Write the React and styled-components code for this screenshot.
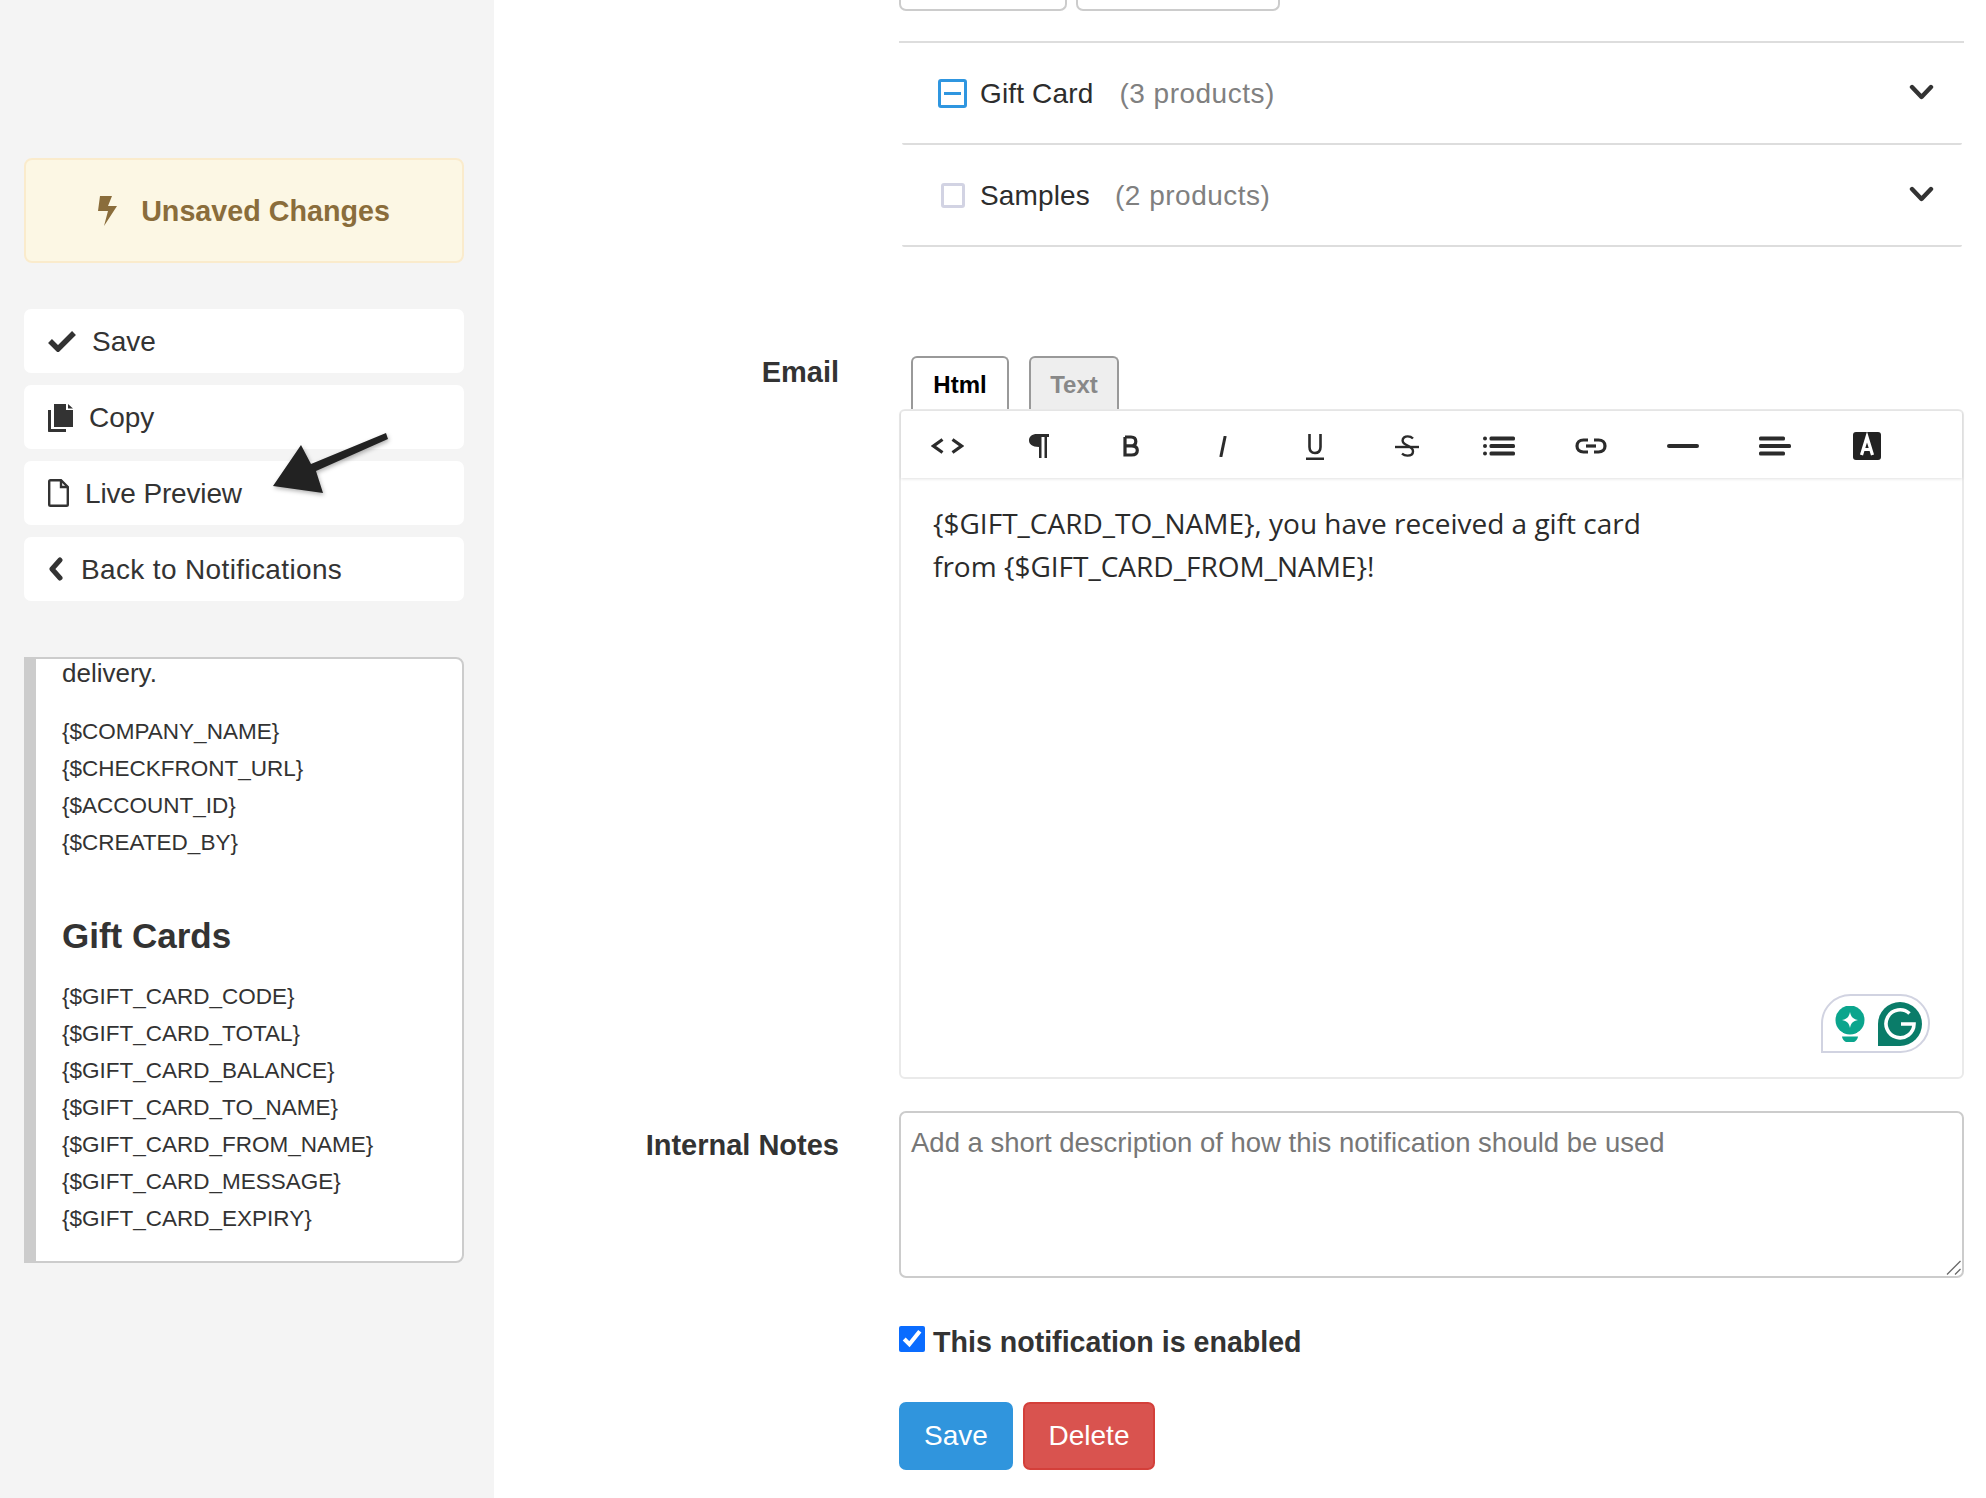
import React from "react";
import styled, { createGlobalStyle } from "styled-components";

const GlobalStyle = createGlobalStyle`
  html, body {
    margin: 0;
    padding: 0;
    background: #fff;
  }
  body {
    font-family: "Liberation Sans", Arial, sans-serif;
    color: #333;
    overflow: hidden;
  }
`;

const Page = styled.div`
  display: flex;
  width: 1986px;
  height: 1498px;
  overflow: hidden;
`;

const Sidebar = styled.aside`
  position: relative;
  box-sizing: border-box;
  width: 494px;
  flex: none;
  padding: 158px 30px 0 24px;
  background: #f4f4f4;
`;

const Alert = styled.div`
  box-sizing: border-box;
  display: flex;
  align-items: center;
  justify-content: center;
  gap: 24px;
  height: 105px;
  margin-bottom: 46px;
  padding-top: 1px;
  background: #fcf7e4;
  border: 2px solid #faebcc;
  border-radius: 8px;
  color: #8a6d3b;
  font-size: 28.7px;
  font-weight: 700;
`;

const ActionList = styled.div`
  display: flex;
  flex-direction: column;
  gap: 12px;
`;

const ActionButton = styled.a`
  box-sizing: border-box;
  display: flex;
  align-items: center;
  gap: ${(p) => p.$gap}px;
  height: 64px;
  padding: 1px 0 0 24px;
  background: #fff;
  border-radius: 7px;
  font-size: 28px;
  letter-spacing: ${(p) => p.$track || 0}px;
  color: #333;

  svg {
    margin-top: -1px;
  }
`;

const Arrow = styled.svg`
  position: absolute;
  left: 267px;
  top: 428px;
  filter: drop-shadow(1px 2px 2px rgba(0, 0, 0, 0.3));
`;

const HelpPanel = styled.div`
  box-sizing: border-box;
  height: 606px;
  margin-top: 56px;
  padding: 0 20px 0 26px;
  background: #fff;
  border: 2px solid #ccc;
  border-left: 12px solid #ccc;
  border-radius: 0 8px 8px 0;
  overflow: hidden;
`;

const HelpText = styled.p`
  margin: 0 0 26px;
  font-size: 26px;
  line-height: 28px;
`;

const VarList = styled.div`
  font-size: 22.5px;
  line-height: 37px;
`;

const HelpHeading = styled.h3`
  margin: 55px 0 22px;
  font-size: 35px;
  line-height: 40px;
  font-weight: 700;
`;

const Main = styled.main`
  flex: 1;
  min-width: 0;
  padding-right: 22px;
`;

const StubRow = styled.div`
  display: flex;
  gap: 9px;
  margin-left: 405px;
`;

const Stub = styled.div`
  box-sizing: border-box;
  width: ${(p) => p.$w}px;
  height: 11px;
  border: 2px solid #ccc;
  border-top: 0;
  border-radius: 0 0 7px 7px;
`;

const ProductList = styled.section`
  margin: 30px 0 0 405px;
  border-top: 2px solid #ddd;
`;

const ProductRow = styled.div`
  box-sizing: border-box;
  display: flex;
  align-items: center;
  height: 102px;
  margin: 0 2px 0 3px;
  padding: 1px 28px 0 23px;
  border-bottom: 2px solid #ddd;
  border-radius: 0 0 2px 2px;
  font-size: 28px;
  letter-spacing: 0.15px;
  color: #2d2d2d;
`;

const CheckSlot = styled.div`
  display: flex;
  justify-content: center;
  width: 55px;
  flex: none;
`;

const PartialBox = styled.span`
  box-sizing: border-box;
  display: flex;
  align-items: center;
  justify-content: center;
  width: 29px;
  height: 29px;
  margin-right: 1px;
  border: 3px solid #2f96e0;
  border-radius: 3px;

  &::after {
    content: "";
    width: 17px;
    height: 3px;
    background: #2f96e0;
  }
`;

const EmptyBox = styled.span`
  box-sizing: border-box;
  width: 24px;
  height: 25px;
  border: 3px solid #d2d3e3;
  border-radius: 3px;
`;

const ProductCount = styled.span`
  margin-left: ${(p) => p.$ml}px;
  letter-spacing: 0.5px;
  color: #808080;
`;

const Chevron = styled.svg`
  margin-left: auto;
  margin-top: -3px;
`;

const FormRow = styled.div`
  display: grid;
  grid-template-columns: 345px 1fr;
  column-gap: 60px;
  margin-top: ${(p) => p.$mt}px;
`;

const FieldLabel = styled.label`
  padding-top: ${(p) => p.$pt}px;
  text-align: right;
  font-size: 29px;
  line-height: 32px;
  font-weight: 700;
  color: #333;
`;

const TabBar = styled.div`
  display: flex;
  gap: 20px;
  padding-left: 12px;
`;

const Tab = styled.div`
  box-sizing: border-box;
  display: flex;
  align-items: center;
  justify-content: center;
  width: ${(p) => p.$w}px;
  height: 53px;
  padding-top: 3px;
  border: 2px solid #999;
  border-bottom: 0;
  border-radius: 6px 6px 0 0;
  background: ${(p) => (p.$active ? "#fff" : "#eee")};
  color: ${(p) => (p.$active ? "#000" : "#888")};
  font-size: 24px;
  font-weight: 700;
`;

const Editor = styled.div`
  position: relative;
  box-sizing: border-box;
  height: 670px;
  border: 2px solid #eaeaea;
  border-radius: 6px;
`;

const Toolbar = styled.div`
  display: flex;
  align-items: center;
  height: 67px;
  box-shadow: 0 1px 3px rgba(0, 0, 0, 0.12);
`;

const ToolButton = styled.span`
  box-sizing: border-box;
  display: flex;
  align-items: center;
  justify-content: center;
  width: 92px;
  height: 100%;
  padding-top: 3px;
`;

const EditorBody = styled.div`
  max-width: 740px;
  padding: 24px 0 0 32px;
  font-family: "Open Sans", sans-serif;
  font-size: 28px;
  line-height: 43px;
  color: #2b2b2b;
`;

const GrammarlyBadge = styled.div`
  position: absolute;
  right: 32px;
  bottom: 24px;
  box-sizing: border-box;
  display: flex;
  align-items: center;
  gap: 13px;
  width: 109px;
  height: 59px;
  padding-left: 12px;
  border: 2px solid #d1d3e1;
  border-radius: 30px 30px 30px 0;
  background: #fff;
`;

const NotesBox = styled.div`
  position: relative;
  height: 167px;
`;

const Notes = styled.textarea`
  display: block;
  box-sizing: border-box;
  width: 100%;
  height: 100%;
  padding: 14px 10px;
  border: 2px solid #ccc;
  border-radius: 7px;
  font-family: "Liberation Sans", Arial, sans-serif;
  font-size: 27.5px;
  line-height: 32px;
  outline: none;
  resize: none;

  &::placeholder {
    color: #777;
    opacity: 1;
  }
`;

const ResizeGrip = styled.svg`
  position: absolute;
  right: 3px;
  bottom: 3px;
`;

const EnableRow = styled.label`
  display: flex;
  align-items: center;
  gap: 8px;
  height: 32px;
  margin: 48px 0 0 405px;
  font-size: 28.6px;
  font-weight: 700;
  color: #333;
`;

const EnableBox = styled.input`
  width: 26px;
  height: 26px;
  margin: -6px 0 0;
  accent-color: #0a6cff;
`;

const Buttons = styled.div`
  display: flex;
  gap: 10px;
  margin: 44px 0 0 405px;
`;

const SolidButton = styled.button`
  box-sizing: border-box;
  width: ${(p) => p.$w}px;
  height: 68px;
  padding: 0;
  border: 2px solid ${(p) => p.$edge};
  border-radius: 7px;
  background: ${(p) => p.$bg};
  color: #fff;
  font-family: "Liberation Sans", Arial, sans-serif;
  font-size: 28px;
`;

const dark = "#2b2b2b";

const toolIcons = [
  <svg key="code" width="33" height="16" viewBox="0 0 33 16" fill="none" stroke={dark} strokeWidth="3.2">
    <polyline points="11.5,1.5 2.5,8 11.5,14.5" />
    <polyline points="21.5,1.5 30.5,8 21.5,14.5" />
  </svg>,
  <svg key="para" width="20" height="24" viewBox="0 0 20 24" fill={dark}>
    <path d="M8 0H20V3H18V24H15.500V3H12.500V24H10V13C3 13 0 10 0 6.500C0 2.500 3 0 8 0Z" />
  </svg>,
  <svg key="bold" width="16" height="22" viewBox="0 0 16 22" fill="none" stroke={dark} strokeWidth="3.2">
    <path d="M2 2V20H8.500C12.500 20 14.300 18 14.300 15.200C14.300 12.400 12.500 10.800 8.500 10.800H2M8 10.800C11.200 10.800 12.800 9 12.800 6.400C12.800 3.800 11.200 2 8 2H2" />
  </svg>,
  <svg key="italic" width="8" height="21" viewBox="0 0 8 21" fill="none" stroke={dark} strokeWidth="3">
    <line x1="6.200" y1="0" x2="1.800" y2="21" />
  </svg>,
  <svg key="underline" width="18" height="27" viewBox="0 0 18 27" fill="none" stroke={dark} strokeWidth="2.600">
    <path d="M3.500 1V14C3.500 18 5.500 20 9 20C12.500 20 14.500 18 14.500 14V1" />
    <line x1="0" y1="25.800" x2="18" y2="25.800" />
  </svg>,
  <svg key="strike" width="24" height="22" viewBox="0 0 24 22" fill="none" stroke={dark} strokeWidth="2.400">
    <path d="M18 3.500C16.500 2 14.800 1.400 12.800 1.400C9.600 1.400 7.600 3 7.600 5.600C7.600 8 9.600 9.400 12.600 10.600C15.800 12 18 13.400 18 16.200C18 19 15.600 20.600 12.400 20.600C10.400 20.600 8.600 20 7 18.600" />
    <line x1="0" y1="12" x2="24" y2="12" />
  </svg>,
  <svg key="list" width="32" height="20" viewBox="0 0 32 20" fill={dark}>
    <circle cx="2" cy="2.500" r="2" />
    <circle cx="2" cy="10" r="2" />
    <circle cx="2" cy="17.500" r="2" />
    <rect x="6.500" y="0.500" width="25.500" height="4" rx="1.500" />
    <rect x="6.500" y="8" width="25.500" height="4" rx="1.500" />
    <rect x="6.500" y="15.500" width="25.500" height="4" rx="1.500" />
  </svg>,
  <svg key="link" width="32" height="16" viewBox="0 0 32 16" fill="none" stroke={dark} strokeWidth="3.200">
    <path d="M13 2H8.500C4.500 2 2 4.500 2 8C2 11.500 4.500 14 8.500 14H13" />
    <path d="M19 2H23.500C27.500 2 30 4.500 30 8C30 11.500 27.500 14 23.500 14H19" />
    <line x1="11" y1="8" x2="21" y2="8" />
  </svg>,
  <svg key="rule" width="32" height="4" viewBox="0 0 32 4" fill={dark}>
    <rect width="32" height="4" rx="2" />
  </svg>,
  <svg key="align" width="32" height="20" viewBox="0 0 32 20" fill={dark}>
    <rect x="0" y="0.500" width="26" height="4" rx="1.500" />
    <rect x="0" y="8" width="32" height="4" rx="1.500" />
    <rect x="0" y="15.500" width="26" height="4" rx="1.500" />
  </svg>,
  <svg key="format" width="28" height="28" viewBox="0 0 28 28">
    <rect width="28" height="28" rx="3" fill="#222" />
    <path d="M8.500 23L14 5L19.500 23M10 17.500H18" fill="none" stroke="#fff" strokeWidth="3.200" />
  </svg>,
];

const chevronDown = (
  <Chevron width="25" height="17" viewBox="0 0 25 17" fill="none" stroke="#333" strokeWidth="4.400" strokeLinecap="round" strokeLinejoin="round">
    <polyline points="3,3 12.500,13 22,3" />
  </Chevron>
);

const baseVars = ["{$COMPANY_NAME}", "{$CHECKFRONT_URL}", "{$ACCOUNT_ID}", "{$CREATED_BY}"];
const giftVars = [
  "{$GIFT_CARD_CODE}",
  "{$GIFT_CARD_TOTAL}",
  "{$GIFT_CARD_BALANCE}",
  "{$GIFT_CARD_TO_NAME}",
  "{$GIFT_CARD_FROM_NAME}",
  "{$GIFT_CARD_MESSAGE}",
  "{$GIFT_CARD_EXPIRY}",
];

export default function App() {
  return (
    <Page>
      <GlobalStyle />
      <Sidebar>
        <Alert>
          <svg width="19" height="30" viewBox="0 0 19 30" fill="#8a6d3b">
            <path d="M2 0H14L10 10H19L6 30L10 15H0Z" />
          </svg>
          Unsaved Changes
        </Alert>

        <ActionList>
          <ActionButton $gap={16}>
            <svg width="28" height="21" viewBox="0 0 28 21" fill="none" stroke="#333" strokeWidth="5.500">
              <polyline points="2,10 10,18 26,2" />
            </svg>
            Save
          </ActionButton>
          <ActionButton $gap={16}>
            <svg width="25" height="29" viewBox="0 0 25 29" fill="#333">
              <path d="M6 1H18V7H25V24H6Z" />
              <path d="M20 1L25 5.500H20Z" />
              <path d="M3 7H0V28C0 28.600 .4 29 1 29H18V26H3Z" />
            </svg>
            Copy
          </ActionButton>
          <ActionButton $gap={16} $track={-0.15}>
            <svg width="21" height="28" viewBox="0 0 21 28" fill="none" stroke="#333" strokeWidth="2.400">
              <path d="M13 1.200H2.500C1.800 1.200 1.200 1.800 1.200 2.500V25.500C1.200 26.200 1.800 26.800 2.500 26.800H18.500C19.200 26.800 19.800 26.200 19.800 25.500V8Z" />
              <path d="M13 1.200V8H19.800" />
            </svg>
            Live Preview
          </ActionButton>
          <ActionButton $gap={18} $track={0.36}>
            <svg width="15" height="24" viewBox="0 0 15 24" fill="none" stroke="#333" strokeWidth="5" strokeLinecap="round" strokeLinejoin="round">
              <polyline points="12,3 4,12 12,21" />
            </svg>
            Back to Notifications
          </ActionButton>
        </ActionList>

        <Arrow width="130" height="70" viewBox="0 0 130 70" fill="#222">
          <path d="M6 58L34 17L44 36L119 5L121 11L49 43L56 65Z" />
        </Arrow>

        <HelpPanel>
          <HelpText>delivery.</HelpText>
          <VarList>
            {baseVars.map((v) => (
              <div key={v}>{v}</div>
            ))}
          </VarList>
          <HelpHeading>Gift Cards</HelpHeading>
          <VarList>
            {giftVars.map((v) => (
              <div key={v}>{v}</div>
            ))}
          </VarList>
        </HelpPanel>
      </Sidebar>

      <Main>
        <StubRow>
          <Stub $w={168} />
          <Stub $w={204} />
        </StubRow>

        <ProductList>
          <ProductRow>
            <CheckSlot>
              <PartialBox />
            </CheckSlot>
            Gift Card
            <ProductCount $ml={26}>(3 products)</ProductCount>
            {chevronDown}
          </ProductRow>
          <ProductRow>
            <CheckSlot>
              <EmptyBox />
            </CheckSlot>
            Samples
            <ProductCount $ml={25}>(2 products)</ProductCount>
            {chevronDown}
          </ProductRow>
        </ProductList>

        <FormRow $mt={109}>
          <FieldLabel $pt={0}>Email</FieldLabel>
          <div>
            <TabBar>
              <Tab $active $w={98}>Html</Tab>
              <Tab $w={90}>Text</Tab>
            </TabBar>
            <Editor>
              <Toolbar>
                {toolIcons.map((icon) => (
                  <ToolButton key={icon.key}>{icon}</ToolButton>
                ))}
              </Toolbar>
              <EditorBody>
                {"{$GIFT_CARD_TO_NAME}"}, you have received a gift card from {"{$GIFT_CARD_FROM_NAME}"}!
              </EditorBody>
              <GrammarlyBadge>
                <svg width="30" height="36" viewBox="0 0 30 36">
                  <circle cx="15" cy="14" r="14.500" fill="#0ba58d" />
                  <path d="M8 24H22V27H8Z" fill="#0ba58d" />
                  <path d="M15 6C16 11 18 13 23 14C18 15 16 17 15 22C14 17 12 15 7 14C12 13 14 11 15 6Z" fill="#fff" />
                  <path d="M7 30.500H23C22.500 34 20 36 18 36H12C10 36 7.500 34 7 30.500Z" fill="#0ba58d" />
                </svg>
                <svg width="44" height="44" viewBox="0 0 44 44">
                  <path d="M22 0A22 22 0 1 1 22 44H0V22A22 22 0 0 1 22 0Z" fill="#0a7c69" />
                  <path d="M31.500 11.500A14 14 0 1 0 36 22H23" fill="none" stroke="#fff" strokeWidth="3.600" />
                </svg>
              </GrammarlyBadge>
            </Editor>
          </div>
        </FormRow>

        <FormRow $mt={32}>
          <FieldLabel $pt={18}>Internal Notes</FieldLabel>
          <NotesBox>
            <Notes placeholder="Add a short description of how this notification should be used" />
            <ResizeGrip width="15" height="15" viewBox="0 0 15 15" stroke="#666" strokeWidth="1.300" fill="none">
              <line x1="1" y1="14.500" x2="14.500" y2="1" />
              <line x1="9" y1="14.500" x2="14.500" y2="9" />
            </ResizeGrip>
          </NotesBox>
        </FormRow>

        <EnableRow>
          <EnableBox type="checkbox" defaultChecked />
          This notification is enabled
        </EnableRow>

        <Buttons>
          <SolidButton $w={114} $bg="#3095dd" $edge="#3095dd">Save</SolidButton>
          <SolidButton $w={132} $bg="#d9534f" $edge="#d43f3a">Delete</SolidButton>
        </Buttons>
      </Main>
    </Page>
  );
}
